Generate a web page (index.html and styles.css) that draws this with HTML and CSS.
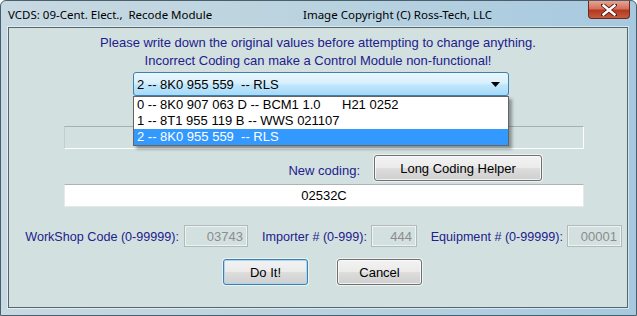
FILE: index.html
```html
<!DOCTYPE html>
<html lang="en">
<head>
  <meta charset="UTF-8">
  <title>VCDS: 09-Cent. Elect., Recode Module</title>
  <link rel="stylesheet" href="styles.css">
</head>
<body>
  <div class="window">
    <div class="titlebar">
      <span class="title">VCDS: 09-Cent. Elect.,  Recode Module</span>
      <span class="title-right">Image Copyright (C) Ross-Tech, LLC</span>
      <div class="close-btn">
        <svg width="16" height="12" viewBox="0 0 16 12">
          <path d="M2 1 L14 11 M14 1 L2 11" stroke="#5a1a14" stroke-width="4.2" stroke-linecap="square"/>
          <path d="M2.5 1.5 L13.5 10.5 M13.5 1.5 L2.5 10.5" stroke="#fff" stroke-width="2.4" stroke-linecap="square"/>
        </svg>
      </div>
    </div>

    <div class="client">
      <p class="warning">Please write down the original values before attempting to change anything.<br>Incorrect Coding can make a Control Module non-functional!</p>

      <div class="combo-wrap">
        <div class="combo">
          <span class="combo-text">2 -- 8K0 955 559  -- RLS</span>
          <svg class="combo-arrow" width="9" height="5" viewBox="0 0 9 5"><path d="M0 0 H9 L4.5 5 Z" fill="#000"/></svg>
        </div>
        <ul class="combo-list">
          <li><span class="part">0 -- 8K0 907 063 D -- BCM1 1.0</span>H21 0252</li>
          <li>1 -- 8T1 955 119 B -- WWS 021107</li>
          <li class="selected">2 -- 8K0 955 559  -- RLS</li>
        </ul>
      </div>

      <div class="readonly-box"></div>

      <div class="coding-row">
        <label class="coding-label">New coding:</label>
        <button class="btn helper-btn">Long Coding Helper</button>
      </div>

      <input class="coding-input" type="text" value="02532C">

      <div class="fields-row">
        <label class="field-label lbl-workshop">WorkShop Code (0-99999):</label>
        <input class="field-input in-workshop" type="text" value="03743" disabled>
        <label class="field-label lbl-importer">Importer # (0-999):</label>
        <input class="field-input in-importer" type="text" value="444" disabled>
        <label class="field-label lbl-equip">Equipment # (0-99999):</label>
        <input class="field-input in-equip" type="text" value="00001" disabled>
      </div>

      <div class="actions">
        <button class="btn default-btn">Do It!</button>
        <button class="btn">Cancel</button>
      </div>
    </div>
  </div>
</body>
</html>
```

FILE: styles.css
```css
body {
  margin: 0;
  background: #fff;
  font-family: "Liberation Sans", Arial, sans-serif;
  font-size: 12px;
}

.window {
  width: 637px;
  height: 316px;
  box-sizing: border-box;
  padding: 0 8px 7px 7px;
  border: 1px solid #4a5f6b;
  border-radius: 6px 6px 0 0;
  background: linear-gradient(90deg, #c7d9e2 0%, #bdd4df 40%, #b2cfe0 70%, #a6c9df 100%);
  display: flex;
  flex-direction: column;
}

.titlebar {
  height: 26px;
  display: flex;
  align-items: center;
  margin-right: -8px;
  font-family: "Noto Sans", "Open Sans", sans-serif;
  font-size: 11.5px;
  color: #000;
}

.title {
  white-space: pre;
  width: 295px;
}

.title-right {
  white-space: pre;
}

.close-btn {
  margin-left: auto;
  margin-right: 6px;
  align-self: flex-start;
  width: 42px;
  height: 18px;
  box-sizing: border-box;
  border: 1px solid #6b2a22;
  border-top: none;
  border-radius: 0 0 4px 4px;
  background: linear-gradient(#e8a493 0%, #d4705a 45%, #b23a22 55%, #c75a3c 100%);
  display: flex;
  align-items: center;
  justify-content: center;
}

.client {
  flex: 1;
  background: #d3e0e0;
  border: 1px solid #55666e;
  box-shadow: 0 0 0 1px rgba(255, 255, 255, 0.5);
  display: flex;
  flex-direction: column;
  align-items: flex-start;
  color: #22208c;
}

.warning {
  margin: 6px 0 0;
  width: 100%;
  text-align: center;
  line-height: 18px;
  font-size: 13px;
}

.combo-wrap {
  position: relative;
  margin: 2px 0 0 124px;
}

.combo {
  width: 376px;
  height: 24px;
  box-sizing: border-box;
  border: 1px solid #3c7fb1;
  border-radius: 3px;
  background: linear-gradient(#eaf6fd 0%, #d9f0fc 45%, #bee6fd 55%, #a7d9f5 100%);
  display: flex;
  align-items: center;
  padding: 0 8px 0 3px;
  color: #000;
}

.combo-text {
  white-space: pre;
  font-size: 13px;
}

.combo-arrow {
  margin-left: auto;
}

.combo-list {
  position: absolute;
  top: 24px;
  left: 0;
  width: 376px;
  box-sizing: border-box;
  margin: 0;
  padding: 0;
  list-style: none;
  background: #fff;
  border: 1px solid #646464;
  box-shadow: 3px 3px 3px rgba(0, 0, 0, 0.35);
  color: #000;
  font-size: 13px;
  z-index: 2;
}

.combo-list li {
  height: 16px;
  line-height: 16px;
  padding-left: 3px;
  white-space: pre;
}

.combo-list .part {
  display: inline-block;
  width: 205px;
}

.combo-list .selected {
  background: #3399ff;
  color: #fff;
}

.readonly-box {
  margin: 30px 0 0 55px;
  width: 520px;
  height: 23px;
  box-sizing: border-box;
  border: 1px solid #fff;
  border-top-color: #a9aeb0;
  border-left-color: #c4cccd;
}

.coding-row {
  display: flex;
  align-items: center;
  margin-top: 6px;
}

.coding-label {
  width: 351px;
  text-align: right;
  font-size: 13px;
  padding-top: 4px;
}

.btn {
  font-family: "Liberation Sans", Arial, sans-serif;
  font-size: 13px;
  color: #000;
  height: 26px;
  box-sizing: border-box;
  border: 1px solid #707070;
  border-radius: 3px;
  background: linear-gradient(#f2f2f2 0%, #ebebeb 48%, #dddddd 52%, #cfcfcf 100%);
  box-shadow: inset 0 0 0 1px rgba(255, 255, 255, 0.7), 0 0 0 1px #eef2f2;
  padding: 0;
}

.helper-btn {
  width: 168px;
  margin-left: 14px;
}

.coding-input {
  margin: 3px 0 0 55px;
  width: 520px;
  height: 23px;
  box-sizing: border-box;
  border: 1px solid #e4eaea;
  border-top-color: #adb2b5;
  background: #fff;
  text-align: center;
  font-family: "Liberation Sans", Arial, sans-serif;
  font-size: 13px;
  color: #000;
  padding: 0;
}

.fields-row {
  display: flex;
  align-items: center;
  margin-top: 18px;
  font-size: 12.6px;
}

.field-label {
  text-align: right;
  white-space: nowrap;
  padding-top: 2px;
}

.lbl-workshop {
  width: 170px;
}

.lbl-importer {
  width: 119px;
}

.lbl-equip {
  width: 146px;
}

.field-input {
  height: 22px;
  box-sizing: border-box;
  border: 1px solid #b3b9ba;
  box-shadow: inset 0 0 0 1px rgba(255, 255, 255, 0.6);
  background: #d3e0e0;
  text-align: right;
  padding: 0 4px 0 0;
  font-family: "Liberation Sans", Arial, sans-serif;
  font-size: 13px;
  color: #8c8c8c;
  -webkit-text-fill-color: #8c8c8c;
}

.in-workshop {
  width: 64px;
  margin-left: 5px;
}

.in-importer {
  width: 46px;
  margin-left: 4px;
}

.in-equip {
  width: 55px;
  margin-left: 4px;
}

.actions {
  display: flex;
  gap: 29px;
  margin: 12px 0 0 214px;
}

.actions .btn {
  width: 85px;
}

.default-btn {
  border-color: #3c7fb1;
  box-shadow: inset 0 0 0 1px #a7d9f5, 0 0 0 1px #eef2f2;
}
```
